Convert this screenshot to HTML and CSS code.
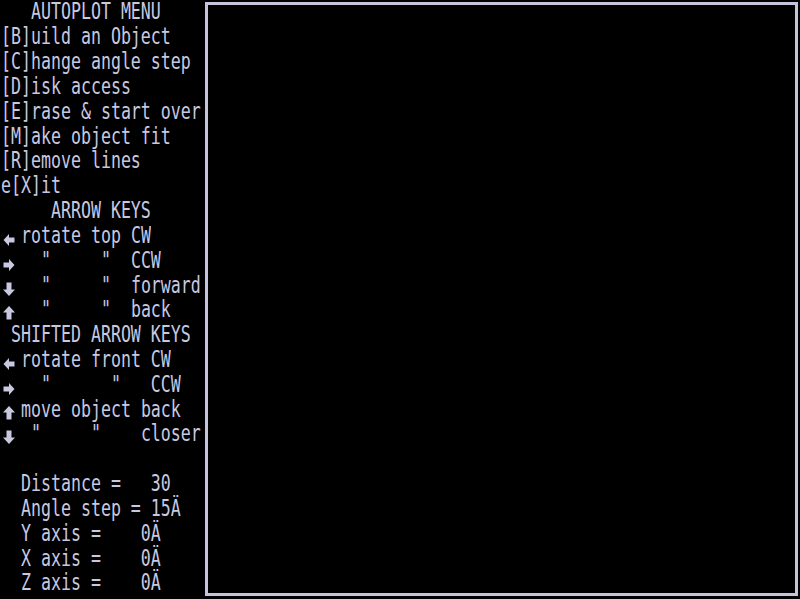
FILE: index.html
```html
<!DOCTYPE html>
<html>
<head>
<meta charset="utf-8">
<link rel="stylesheet" href="styles.css">
</head>
<body>
<div class="screen">
  <div class="menu">
    <div class="row"><span class="t">   AUTOPLOT MENU</span></div>
    <div class="row"><span class="t">[B]uild an Object</span></div>
    <div class="row"><span class="t">[C]hange angle step</span></div>
    <div class="row"><span class="t">[D]isk access</span></div>
    <div class="row"><span class="t">[E]rase &amp; start over</span></div>
    <div class="row"><span class="t">[M]ake object fit</span></div>
    <div class="row"><span class="t">[R]emove lines</span></div>
    <div class="row"><span class="t">e[X]it</span></div>
    <div class="row"><span class="t">     ARROW KEYS</span></div>
    <div class="row"><svg class="arr" viewBox="0 0 12 20"><polygon points="0.5,14 6,8 6,11.5 11.5,11.5 11.5,16.5 6,16.5 6,20"/></svg><span class="t">rotate top CW</span></div>
    <div class="row"><svg class="arr" viewBox="0 0 12 20"><polygon points="11.5,14 6,8 6,11.5 0.5,11.5 0.5,16.5 6,16.5 6,20"/></svg><span class="t">  "     "  CCW</span></div>
    <div class="row"><svg class="arr" viewBox="0 0 12 20"><polygon points="6,20 0,13.5 3.5,13.5 3.5,6.5 8.5,6.5 8.5,13.5 12,13.5"/></svg><span class="t">  "     "  forward</span></div>
    <div class="row"><svg class="arr" viewBox="0 0 12 20"><polygon points="6,6 0,12.5 3.5,12.5 3.5,19.5 8.5,19.5 8.5,12.5 12,12.5"/></svg><span class="t">  "     "  back</span></div>
    <div class="row"><span class="t"> SHIFTED ARROW KEYS</span></div>
    <div class="row"><svg class="arr" viewBox="0 0 12 20"><polygon points="0.5,14 6,8 6,11.5 11.5,11.5 11.5,16.5 6,16.5 6,20"/></svg><span class="t">rotate front CW</span></div>
    <div class="row"><svg class="arr" viewBox="0 0 12 20"><polygon points="11.5,14 6,8 6,11.5 0.5,11.5 0.5,16.5 6,16.5 6,20"/></svg><span class="t">  "      "   CCW</span></div>
    <div class="row"><svg class="arr" viewBox="0 0 12 20"><polygon points="6,6 0,12.5 3.5,12.5 3.5,19.5 8.5,19.5 8.5,12.5 12,12.5"/></svg><span class="t">move object back</span></div>
    <div class="row"><svg class="arr" viewBox="0 0 12 20"><polygon points="6,20 0,13.5 3.5,13.5 3.5,6.5 8.5,6.5 8.5,13.5 12,13.5"/></svg><span class="t"> "     "    closer</span></div>
    <div class="row"><span class="t"> </span></div>
    <div class="row"><span class="t">  Distance =   30</span></div>
    <div class="row"><span class="t">  Angle step = 15Ä</span></div>
    <div class="row"><span class="t">  Y axis =    0Ä</span></div>
    <div class="row"><span class="t">  X axis =    0Ä</span></div>
    <div class="row"><span class="t">  Z axis =    0Ä</span></div>
  </div>
  <div class="canvas"></div>
</div>
</body>
</html>
```
FILE: styles.css
```css
html, body {
  margin: 0;
  padding: 0;
  background: #000;
  width: 800px;
  height: 599px;
  overflow: hidden;
}
.screen {
  display: flex;
  width: 800px;
  height: 599px;
}
.menu {
  width: 204px;
  flex: none;
  padding-left: 1px;
  font-family: "DejaVu Sans Mono", monospace;
  font-size: 16.6px;
  color: #c8c8e0;
}
.row {
  height: 24.83px;
  display: flex;
  align-items: center;
  white-space: pre;
}
.t {
  display: inline-block;
  line-height: 16px;
  height: 16px;
  transform: scaleY(1.35);
  transform-origin: 50% 50%;
}
.arr {
  display: block;
  width: 12px;
  height: 20px;
  flex: none;
  margin-left: 2px;
  margin-right: 6px;
  fill: #c8c8e0;
}
.canvas {
  flex: none;
  margin-top: 2px;
  width: 587px;
  height: 588px;
  border: 3px solid #c4c4dc;
  background: #000;
}
```
